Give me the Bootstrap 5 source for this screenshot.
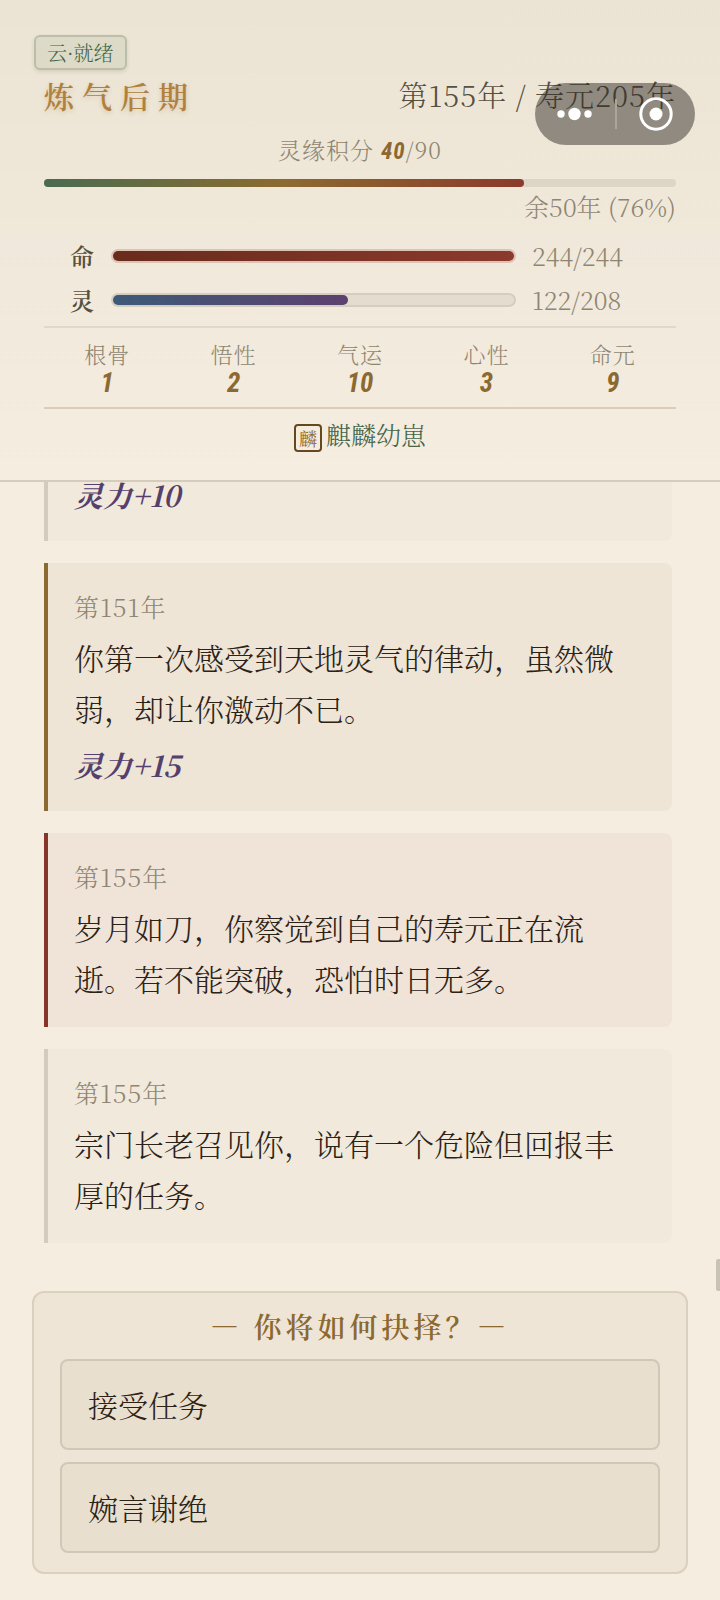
<!DOCTYPE html>
<html lang="zh-CN">
<head>
<meta charset="utf-8">
<meta name="viewport" content="width=device-width, initial-scale=1">
<title>炼气后期</title>
<link href="https://cdn.jsdelivr.net/npm/bootstrap@5.3.0/dist/css/bootstrap.min.css" rel="stylesheet">
<style>
  :root {
    --paper: #f5ede0;
    --ink: #2c2216;
    --ink-soft: #8f8672;
    --gold: #8b6930;
    --red: #863629;
    --jade: #44654a;
    --violet: #553f6b;
    --line: #d5ccbd;
  }
  body {
    background: var(--paper);
    color: var(--ink);
    font-family: "Noto Serif CJK SC", "Noto Serif SC", "Noto Sans CJK SC", serif;
    font-weight: 300;
  }
  .brush { font-family: "LXGW WenKai", "Kaiti SC", KaiTi, "Noto Serif CJK SC", "Noto Sans CJK SC", serif; font-weight: 600; }
  .digits { font-family: "Roboto Condensed", "Liberation Sans Narrow", "Liberation Sans", sans-serif; font-style: italic; font-weight: 700; color: var(--gold); }

  .status-head { background: linear-gradient(#ebe4d4, #f5ede0); border-bottom: 2px solid var(--line); padding: 35px 44px 28px; }
  .cloud { margin-left: -10px; padding: 0 11px; font-size: 20px; line-height: 31px; color: var(--jade); background: #dddbc7; border: 2px solid #bcbea9; border-radius: 6px; box-shadow: 0 2px 4px #0000001a; }
  .title-row { line-height: 50px; margin-bottom: 4px; }
  .realm { font-size: 30px; line-height: inherit; letter-spacing: 8px; color: #b0803f; text-shadow: 0 2px 5px #b0803f55; }
  .age { font-size: 29px; letter-spacing: 1px; color: #57503f; }
  .score { font-size: 23px; line-height: 52px; height: 53px; letter-spacing: 1px; color: var(--ink-soft); }
  .remain { margin-bottom: 9px; font-size: 25px; line-height: 38px; color: var(--ink-soft); }

  .life-track { height: 8px; margin-top: 2px; border-radius: 4px; background: #ddd6c6; }
  .life-fill { border-radius: 4px; background: linear-gradient(90deg, #4a6b4f, #8b6b30 50%, #8b3a2c); }

  .vital { height: 44px; padding-left: 26px; gap: 16px; font-size: 25px; }
  .vital-name { width: 25px; color: #57503f; font-size: 24px; }
  .vital-track { height: 14px; border: 2px solid #d5cdbf; border-radius: 7px; background: #e4dccf; }
  .vital-fill { border-radius: 5px; }
  .vital-num { width: 144px; color: var(--ink-soft); }
  .hp .vital-track { border-color: #dcc3b5; }
  .hp .vital-fill { background: linear-gradient(90deg, #682b1c, #8b3a2c); }
  .mp .vital-fill { background: linear-gradient(90deg, #3e5a78, #5c416f); }

  .traits { margin-top: 4px; padding: 10px 0; border-top: 2px solid #e0d8c9; border-bottom: 2px solid #dccdb9; }
  .trait-name { font-size: 22px; line-height: 32px; letter-spacing: 1px; color: var(--ink-soft); }
  .trait-num { font-size: 27px; line-height: 27px; }
  .pet { padding-top: 8px; font-size: 25px; line-height: 35px; color: var(--jade); gap: 4px; }
  .seal { width: 28px; height: 28px; margin-top: 7px; border: 2px solid #64491f; border-radius: 4px; font-size: 18px; font-weight: 400; line-height: 1; color: var(--gold); }

  .capsule { top: 83px; right: 25px; width: 160px; height: 62px; border-radius: 31px; background: rgba(42, 38, 34, .48); }
  .capsule svg { display: block; }
  .capsule-rule { width: 2px; height: 30px; background: #aaa59d; }

  .history { min-height: 0; padding: 0 48px 48px 44px; gap: 22px; }
  .event { padding: 21px 44px 23px 26px; border-left: 4px solid #d3cbbd; border-radius: 0 8px 8px 0; background: #f1e9dc; }
  .event-gold { border-color: var(--gold); background: #eee5d6; }
  .event-red { border-color: var(--red); background: #f0e4d8; }
  .event-year { margin-bottom: 4px; font-size: 25px; line-height: 44px; letter-spacing: 1px; color: var(--ink-soft); }
  .event-text { font-size: 30px; line-height: 51px; }
  .gain { margin-top: 8px; font-size: 29px; line-height: 46px; font-style: italic; font-weight: 700; color: var(--violet); }
  .thumb { right: 0; bottom: 0; width: 4px; height: 32px; border-radius: 2px 0 0 2px; background: #c9c3b6; }

  .choices { margin: 0 32px 26px; padding: 8px 26px 19px; border: 2px solid #dad0bd; border-radius: 12px; background: #eee5d6; }
  .choices-title { font-size: 28px; line-height: 50px; letter-spacing: 4px; color: var(--gold); margin: 0 0 8px; }
  .choice-list { gap: 12px; }
  .choice { --bs-btn-color: var(--ink); --bs-btn-bg: #e8dfce; --bs-btn-border-color: #d1c7b6; --bs-btn-hover-color: var(--ink); --bs-btn-hover-bg: #e2d8c5; padding: 20px 26px; border-width: 2px; border-radius: 8px; font-size: 30px; line-height: 47px; font-weight: 300; }
</style>
</head>
<body class="vh-100 d-flex flex-column position-relative">

<header class="status-head flex-shrink-0">
  <div class="d-flex"><span class="cloud">云·就绪</span></div>
  <div class="title-row d-flex justify-content-between">
    <h1 class="realm brush m-0">炼气后期</h1>
    <div class="age">第155年 / 寿元205年</div>
  </div>
  <div class="score text-center">灵缘积分 <span class="digits">40</span>/90</div>
  <div class="life-track"><div class="life-fill h-100" style="width:76%"></div></div>
  <div class="remain text-end">余50年 (76%)</div>

  <div class="vital hp d-flex align-items-center">
    <span class="vital-name brush">命</span>
    <div class="vital-track flex-grow-1"><div class="vital-fill h-100" style="width:100%"></div></div>
    <span class="vital-num">244/244</span>
  </div>
  <div class="vital mp d-flex align-items-center">
    <span class="vital-name brush">灵</span>
    <div class="vital-track flex-grow-1"><div class="vital-fill h-100" style="width:58.65%"></div></div>
    <span class="vital-num">122/208</span>
  </div>

  <div class="traits row g-0 text-center">
    <div class="col"><div class="trait-name">根骨</div><div class="trait-num digits">1</div></div>
    <div class="col"><div class="trait-name">悟性</div><div class="trait-num digits">2</div></div>
    <div class="col"><div class="trait-name">气运</div><div class="trait-num digits">10</div></div>
    <div class="col"><div class="trait-name">心性</div><div class="trait-num digits">3</div></div>
    <div class="col"><div class="trait-name">命元</div><div class="trait-num digits">9</div></div>
  </div>
  <div class="pet d-flex justify-content-center">
    <span class="seal brush d-flex align-items-center justify-content-center">麟</span>
    <span>麒麟幼崽</span>
  </div>
</header>

<!-- mini-program capsule, floats over the header -->
<div class="capsule position-absolute d-flex align-items-center">
  <button type="button" class="btn border-0 p-0 flex-fill d-flex justify-content-center" aria-label="更多">
    <svg width="36" height="14" viewBox="0 0 36 14" fill="#fff"><circle cx="4" cy="7" r="3.7"/><circle cx="17.5" cy="7" r="6.2"/><circle cx="31" cy="7" r="3.7"/></svg>
  </button>
  <span class="capsule-rule"></span>
  <button type="button" class="btn border-0 p-0 flex-fill d-flex justify-content-center" aria-label="关闭">
    <svg width="34" height="34" viewBox="0 0 34 34"><circle cx="17" cy="17" r="15.2" fill="none" stroke="#fff" stroke-width="3"/><circle cx="17" cy="17" r="6.5" fill="#fff"/></svg>
  </button>
</div>

<main class="history position-relative flex-grow-1 overflow-hidden d-flex flex-column justify-content-end">
  <article class="event flex-shrink-0">
    <div class="gain mt-0">灵力+10</div>
  </article>
  <article class="event event-gold flex-shrink-0">
    <div class="event-year">第151年</div>
    <div class="event-text">你第一次感受到天地灵气的律动，虽然微弱，却让你激动不已。</div>
    <div class="gain">灵力+15</div>
  </article>
  <article class="event event-red flex-shrink-0">
    <div class="event-year">第155年</div>
    <div class="event-text">岁月如刀，你察觉到自己的寿元正在流逝。若不能突破，恐怕时日无多。</div>
  </article>
  <article class="event flex-shrink-0">
    <div class="event-year">第155年</div>
    <div class="event-text">宗门长老召见你，说有一个危险但回报丰厚的任务。</div>
  </article>
  <span class="thumb position-absolute"></span>
</main>

<section class="choices flex-shrink-0">
  <h2 class="choices-title brush text-center">— 你将如何抉择？—</h2>
  <div class="choice-list d-grid">
    <button type="button" class="btn choice text-start">接受任务</button>
    <button type="button" class="btn choice text-start">婉言谢绝</button>
  </div>
</section>

<script src="https://cdn.jsdelivr.net/npm/bootstrap@5.3.0/dist/js/bootstrap.bundle.min.js"></script>
</body>
</html>
